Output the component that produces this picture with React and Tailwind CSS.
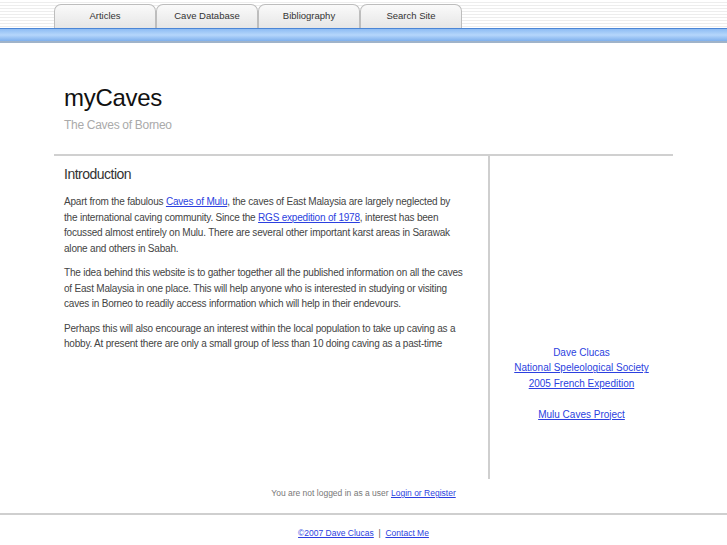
const tabs = ["Articles", "Cave Database", "Bibliography", "Search Site"];

function Header() {
  return (
    <div>
      <div className="h-[28px] bg-[repeating-linear-gradient(to_bottom,#ffffff_0px,#ffffff_2px,#ededed_2px,#ededed_3px)] flex items-end pl-[54px]">
        {tabs.map((t) => (
          <div
            key={t}
            className="w-[102px] h-[24px] rounded-t-[7px] border border-b-0 border-[#bdbdbd] bg-gradient-to-b from-[#fafafa] to-[#e6e6e6] flex items-center justify-center text-[9.5px] text-[#333] pb-[1px]"
          >
            {t}
          </div>
        ))}
      </div>
      <div className="h-[15px] border-t border-[#4b86d6] bg-gradient-to-b from-[#8ebcf3] via-[#b5d6fb] to-[#7fb0ec] border-b-[2px] border-b-[#9fb3c9]" />
    </div>
  );
}

function A({ children }) {
  return <a href="#" className="text-[#2b3fe0] underline">{children}</a>;
}

export default function App() {
  return (
    <div className="bg-white min-h-[545px] font-['Liberation_Sans',Arial,sans-serif]">
      <Header />
      <div className="px-[64px] pt-[41px] h-[111px]">
        <h1 className="text-[24px] leading-[28px] text-[#111] tracking-[-0.3px]">myCaves</h1>
        <div className="mt-[4px] text-[12px] text-[#aaa] tracking-[-0.3px]">The Caves of Borneo</div>
      </div>
      <div className="mx-[54px] border-t-[2px] border-[#d0d0d0] flex">
        <div className="w-[436px] border-r-[2px] border-[#cfcfcf] pl-[10px] pr-[8px] pt-[8px] h-[323px]">
          <h2 className="text-[14px] leading-[20px] text-[#333] tracking-[-0.5px]">Introduction</h2>
          <div className="mt-[10px] text-[10px] leading-[15.5px] text-[#444] tracking-[-0.2px] space-y-[9px]">
            <p>
              Apart from the fabulous <A>Caves of Mulu</A>, the caves of East Malaysia are largely neglected by
              <br />
              the international caving community. Since the <A>RGS expedition of 1978</A>, interest has been
              <br />
              focussed almost entirely on Mulu. There are several other important karst areas in Sarawak
              <br />
              alone and others in Sabah.
            </p>
            <p>
              The idea behind this website is to gather together all the published information on all the caves
              <br />
              of East Malaysia in one place. This will help anyone who is interested in studying or visiting
              <br />
              caves in Borneo to readily access information which will help in their endevours.
            </p>
            <p>
              Perhaps this will also encourage an interest within the local population to take up caving as a
              <br />
              hobby. At present there are only a small group of less than 10 doing caving as a past-time
            </p>
          </div>
        </div>
        <div className="flex-1 pt-[189px] flex flex-col items-center text-[10px] leading-[15.4px] text-[#2b3fe0]">
          <span>Dave Clucas</span>
          <A>National Speleological Society</A>
          <A>2005 French Expedition</A>
          <div className="h-[15.4px]" />
          <A>Mulu Caves Project</A>
        </div>
      </div>
      <div className="text-center text-[8.5px] text-[#777] pt-[8px] h-[34px]">
        You are not logged in as a user <A>Login or Register</A>
      </div>
      <div className="border-t-[2px] border-[#cfcfcf] text-center text-[8.5px] text-[#555] pt-[12px]">
        <A>©2007 Dave Clucas</A> &nbsp;|&nbsp; <A>Contact Me</A>
      </div>
    </div>
  );
}
